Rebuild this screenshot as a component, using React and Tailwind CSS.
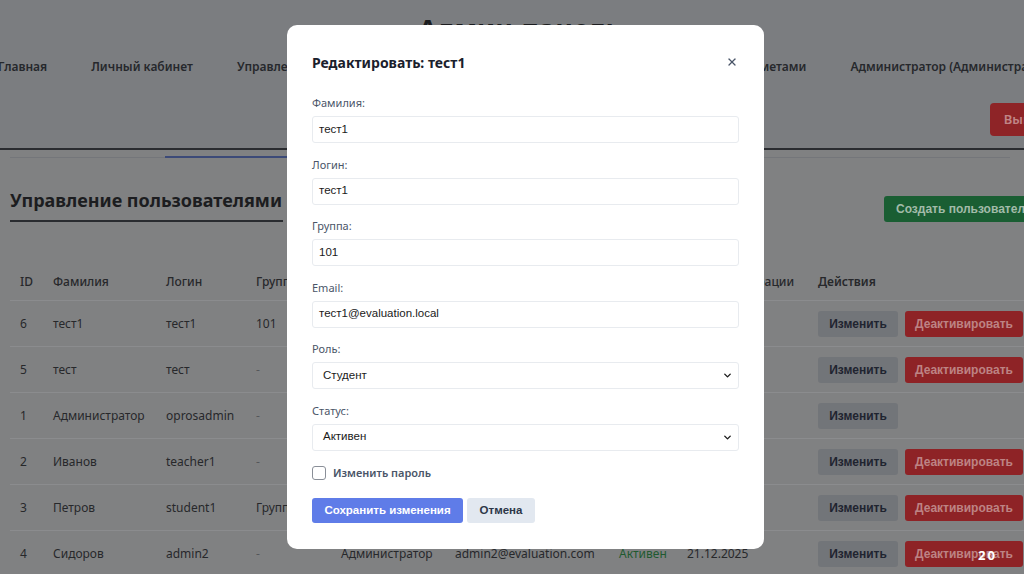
import { X, ChevronDown } from "lucide-react";

const UI = { fontFamily: '"Noto Sans", "Open Sans", sans-serif' };
const ARIAL = { fontFamily: '"Liberation Sans", Arial, sans-serif' };

const users = [
  { id: 6, last: "тест1", login: "тест1", group: "101", role: "Студент", email: "тест1@evaluation.local", status: "Активен", date: "21.12.2025", deact: true },
  { id: 5, last: "тест", login: "тест", group: "-", role: "Студент", email: "test@evaluation.local", status: "Активен", date: "21.12.2025", deact: true },
  { id: 1, last: "Администратор", login: "oprosadmin", group: "-", role: "Администратор", email: "admin@evaluation.com", status: "Активен", date: "20.12.2025", deact: false },
  { id: 2, last: "Иванов", login: "teacher1", group: "-", role: "Преподаватель", email: "teacher1@evaluation.com", status: "Активен", date: "21.12.2025", deact: true },
  { id: 3, last: "Петров", login: "student1", group: "Группа 1", role: "Студент", email: "student1@evaluation.com", status: "Активен", date: "21.12.2025", deact: true },
  { id: 4, last: "Сидоров", login: "admin2", group: "-", role: "Администратор", email: "admin2@evaluation.com", status: "Активен", date: "21.12.2025", deact: true },
];

const cols = "grid grid-cols-[33px_113px_90px_85px_114px_164px_68px_131px_1fr] items-center pl-[10px]";

function Field({ label, value, select }) {
  return (
    <div className="mb-[13.5px]">
      <div className="text-[11px] leading-[16px] text-[#4a5568]">{label}</div>
      <div
        className="mt-[5px] h-[27px] rounded-[3px] border border-[#e8ebef] flex items-center justify-between text-[11.5px] text-[#1a1a1a]"
        style={ARIAL}
      >
        <span className={select ? "pl-[10px]" : "pl-[6px]"}>{value}</span>
        {select && <ChevronDown size={11} strokeWidth={3} className="mr-[5px] text-[#1a1a1a]" />}
      </div>
    </div>
  );
}

export default function App() {
  return (
    <div className="relative w-[1024px] h-[574px] overflow-hidden bg-[#808182]" style={UI}>
      {/* dimmed page */}
      <div className="w-[1080px]">
        <header className="bg-[#7b7d80] h-[148px]">
          <h1 className="pt-[12px] text-center text-[27px] leading-[34px] font-bold text-[#1c1d20] w-[1040px]">
            Админ-панель
          </h1>
          <nav className="mt-[12px] ml-[-2px] flex gap-[44px] text-[12px] leading-[18px] font-semibold text-[#26282c] whitespace-nowrap">
            <span>Главная</span>
            <span>Личный кабинет</span>
            <span>Управление пользователями</span>
            <span>Управление вопросами</span>
            <span className="ml-[8px]">Управление предметами</span>
            <span>Администратор (Администратор)</span>
          </nav>
          <div className="mt-[27px] flex justify-end pr-[20px]">
            <span className="h-[33px] w-[70px] rounded-[4px] bg-[#8e2427] text-[#c08687] text-[13px] font-semibold flex items-center justify-center">
              Выйти
            </span>
          </div>
        </header>
        <div className="h-[2px] bg-[#2a2c30]" />
        <div className="mt-[6px] ml-[10px] flex w-[1000px]">
          <div className="w-[155px] h-px mt-px bg-[#74767a]" />
          <div className="w-[200px] h-[2px] bg-[#3c4a78]" />
          <div className="flex-1 h-px mt-px bg-[#74767a]" />
        </div>

        <div className="mt-[30px] pl-[10px] flex items-start">
          <div>
            <h2 className="text-[18px] leading-[24px] font-bold text-[#1c1d20] whitespace-nowrap">Управление пользователями</h2>
            <div className="mt-[8px] w-[273px] h-[2px] bg-[#2a2c30]" />
          </div>
          <span
            className="ml-[601px] mt-[8px] h-[26px] w-[160px] shrink-0 rounded-[3px] bg-[#1a5e33] text-[#a2bba9] text-[12px] font-bold flex items-center justify-center whitespace-nowrap"
            style={ARIAL}
          >
            Создать пользователя
          </span>
        </div>

        <div className="mt-[41px] ml-[10px] w-[1060px] text-[12px] text-[#27282b]">
          <div className={`${cols} h-[38px] border-b border-[#8b8c8e] font-medium`}>
            <span>ID</span>
            <span>Фамилия</span>
            <span>Логин</span>
            <span>Группа</span>
            <span>Роль</span>
            <span>Email</span>
            <span>Статус</span>
            <span>Дата регистрации</span>
            <span className="font-semibold">Действия</span>
          </div>
          {users.map((u) => (
            <div key={u.id} className={`${cols} h-[46px] border-b border-[#8b8c8e]`}>
              <span>{u.id}</span>
              <span>{u.last}</span>
              <span>{u.login}</span>
              <span className={u.group === "-" ? "text-[#55575b]" : ""}>{u.group}</span>
              <span>{u.role}</span>
              <span>{u.email}</span>
              <span className="text-[#1f5a30]">{u.status}</span>
              <span>{u.date}</span>
              <div className="flex gap-[7px] font-bold text-[12px]" style={ARIAL}>
                <span className="h-[26px] w-[80px] rounded-[3px] bg-[#727579] text-[#1f2430] flex items-center justify-center">
                  Изменить
                </span>
                {u.deact && (
                  <span className="h-[26px] w-[118px] rounded-[3px] bg-[#8e2326] text-[#bd8384] flex items-center justify-center">
                    Деактивировать
                  </span>
                )}
              </div>
            </div>
          ))}
        </div>
      </div>

      {/* modal */}
      <div className="absolute left-[287px] top-[25px] w-[477px] h-[524px] bg-white rounded-[10px] px-[25px] pt-[26px]">
        <div className="flex items-center justify-between h-[22px]">
          <h3 className="text-[14px] font-bold text-[#1a202c]">Редактировать: тест1</h3>
          <X size={12} strokeWidth={2.6} className="mr-[1px] text-[#4a5568]" />
        </div>
        <div className="mt-[22px]">
          <Field label="Фамилия:" value="тест1" />
          <Field label="Логин:" value="тест1" />
          <Field label="Группа:" value="101" />
          <Field label="Email:" value="тест1@evaluation.local" />
          <Field label="Роль:" value="Студент" select />
          <Field label="Статус:" value="Активен" select />
        </div>
        <label className="mt-[15.5px] flex items-center gap-[7px] h-[14px]">
          <span className="w-[14px] h-[14px] rounded-[3px] border border-[#8a8f98]" />
          <span className="text-[11px] font-semibold text-[#4a5568]">Изменить пароль</span>
        </label>
        <div className="mt-[18px] flex gap-[4px] text-[11.5px] font-bold" style={ARIAL}>
          <span className="h-[25px] w-[151px] rounded-[3px] bg-[#5f7ce8] text-white flex items-center justify-center">
            Сохранить изменения
          </span>
          <span className="h-[25px] w-[68px] rounded-[3px] bg-[#e2e8f0] text-[#2d3748] flex items-center justify-center">
            Отмена
          </span>
        </div>
      </div>

      <span className="absolute left-[978px] top-[546px] text-[13px] font-bold tracking-[2px] text-white">20</span>
    </div>
  );
}
